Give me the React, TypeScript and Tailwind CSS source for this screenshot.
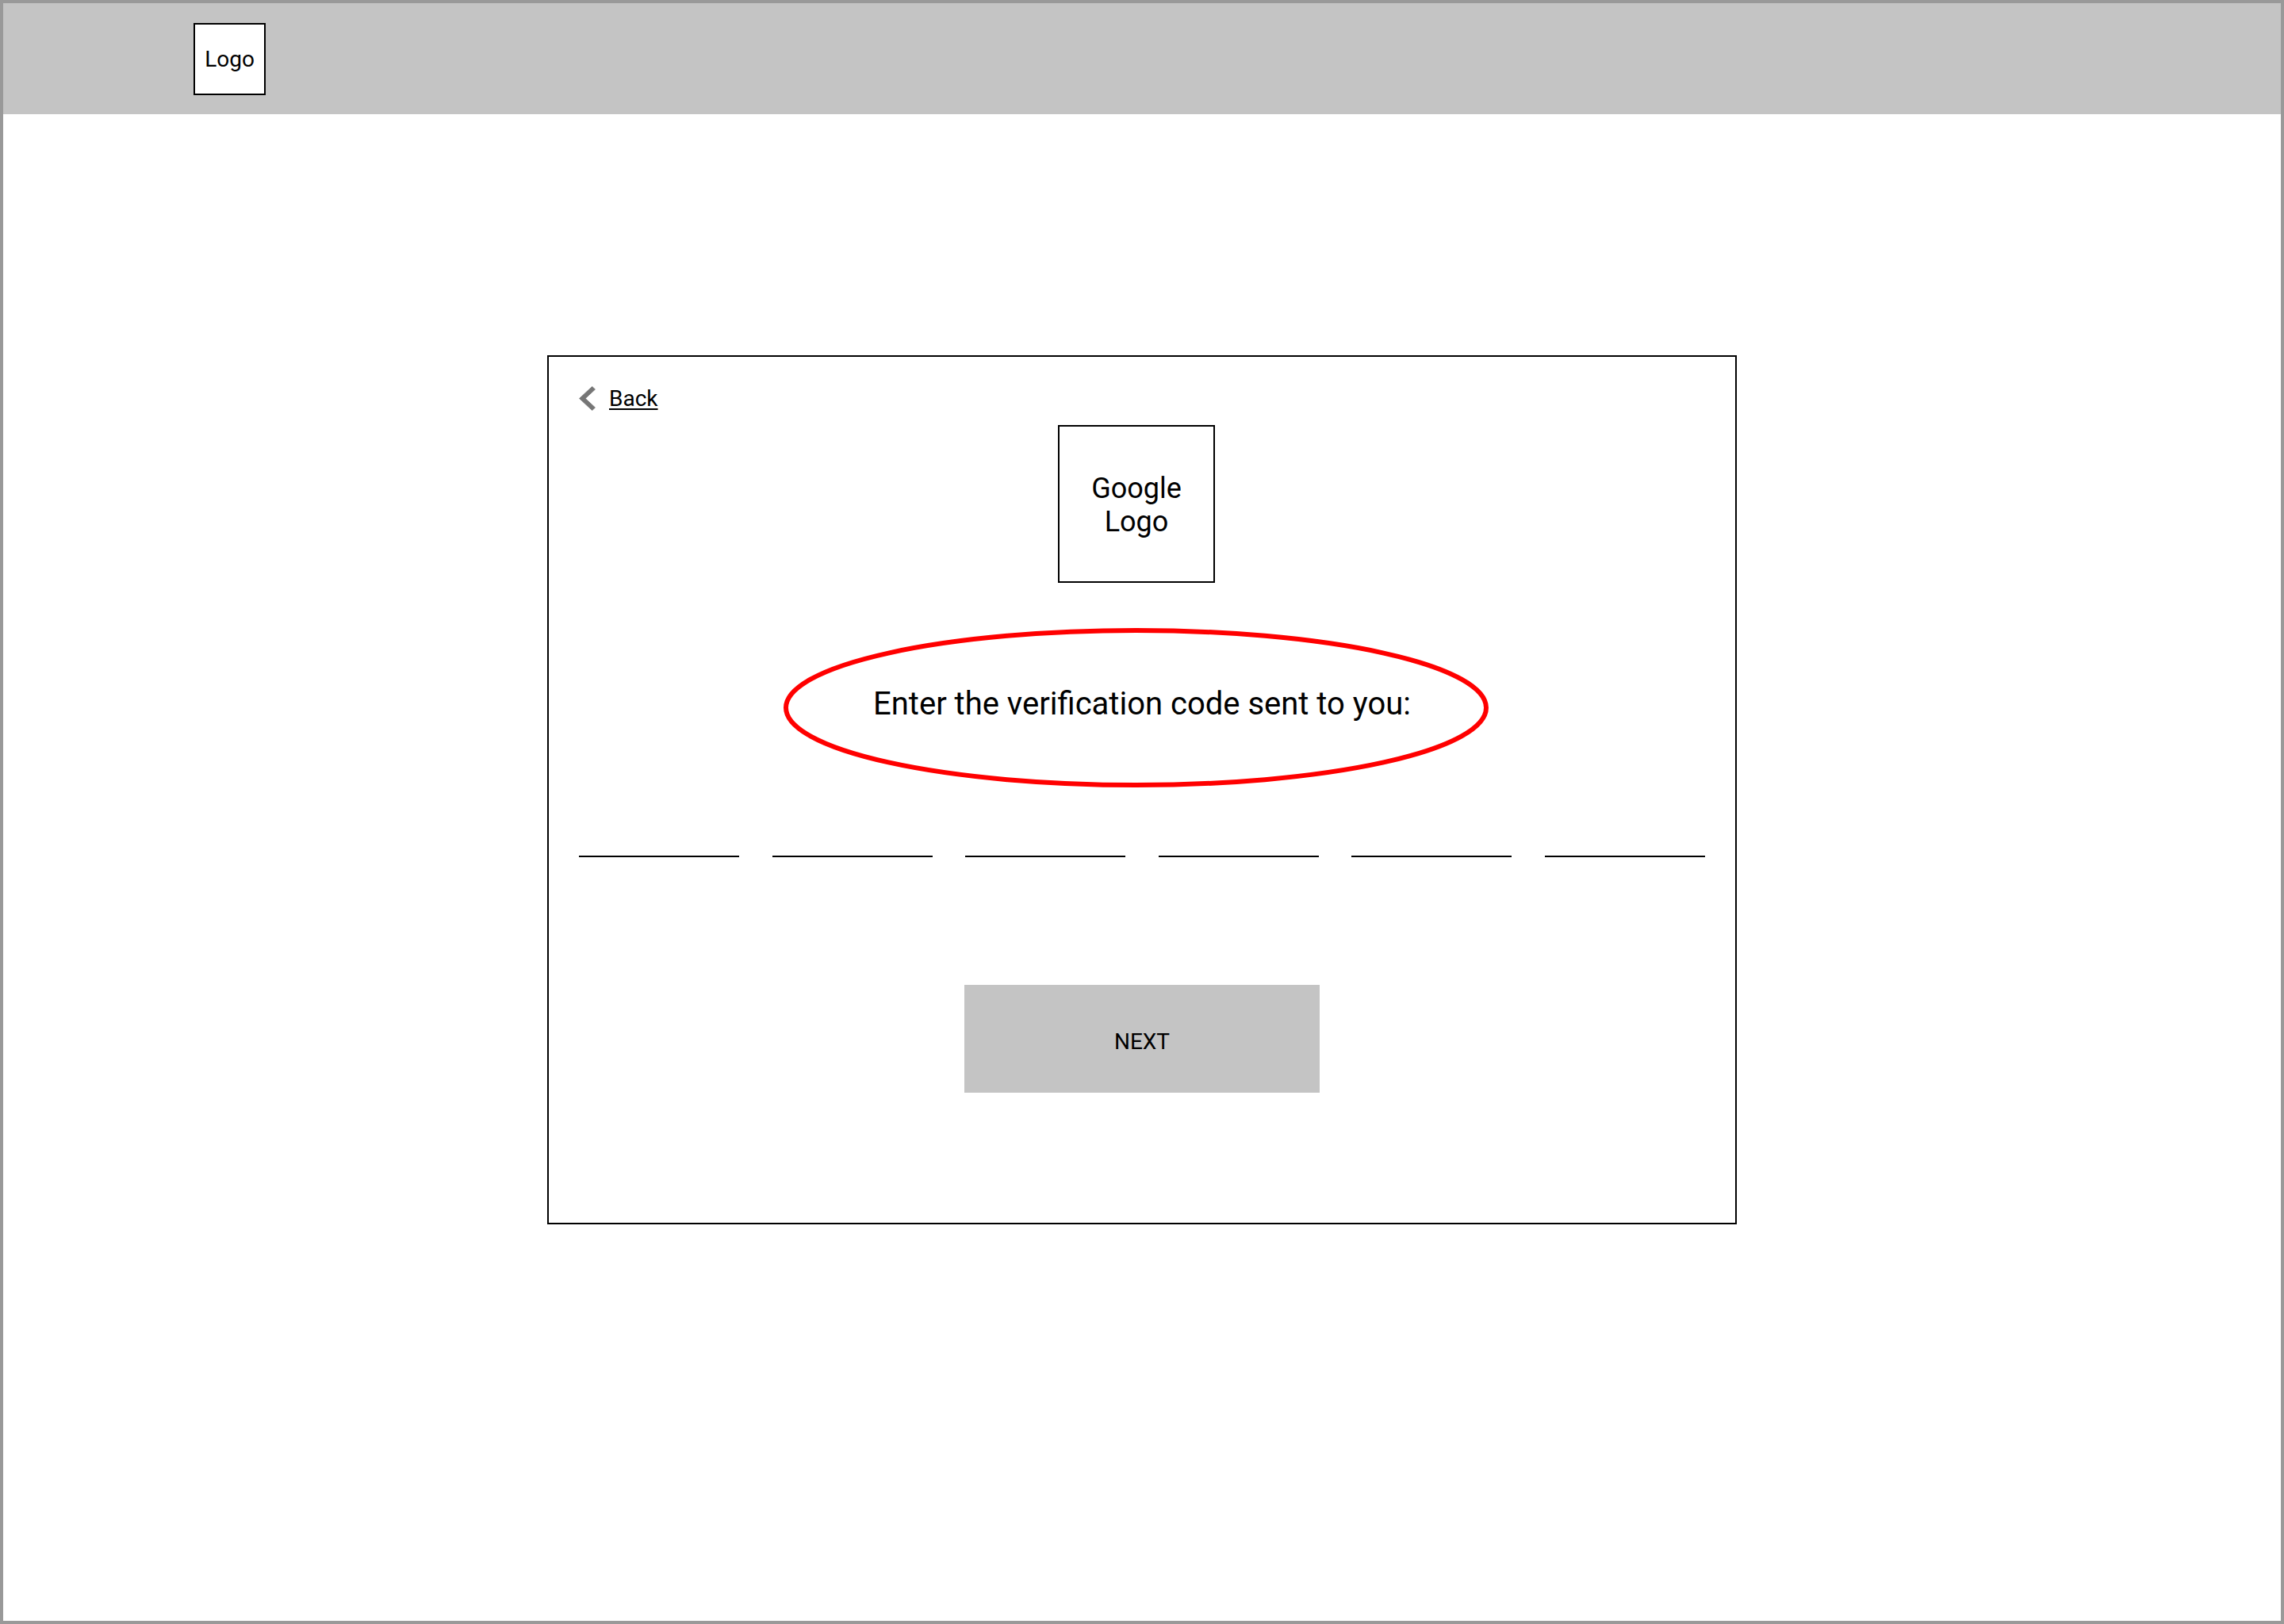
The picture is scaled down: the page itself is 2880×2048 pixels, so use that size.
import React from "react";

export default function App() {
  return (
    <div
      className="w-[2880px] h-[2048px] border-4 border-[#999999] bg-white flex flex-col text-black"
      style={{ fontFamily: "Roboto, 'Liberation Sans', sans-serif" }}
    >
      <header className="h-[140px] bg-[#c4c4c4] flex items-center pl-[240px] shrink-0">
        <div className="w-[91px] h-[91px] border-2 border-black bg-white flex items-center justify-center text-[28px] leading-[33px]">
          Logo
        </div>
      </header>

      <main className="flex flex-col items-center pt-[304px]">
        <div className="relative w-[1500px] h-[1096px] border-2 border-black bg-white flex flex-col px-[38px] pt-[36px]">
          <div className="flex items-center gap-[17px] h-[33px]">
            <svg
              width="21"
              height="31"
              viewBox="7.8 5.8 7.81 12.4"
              preserveAspectRatio="none"
              aria-hidden="true"
            >
              <path
                d="M15.41 7.41L14 6l-6 6 6 6 1.41-1.41L10.83 12z"
                fill="#767676"
                stroke="#767676"
                strokeWidth="0.3"
              />
            </svg>
            <span className="text-[28px] leading-[33px] underline underline-offset-[3px] decoration-2">
              Back
            </span>
          </div>

          <div className="mt-[17px] ml-[604px] self-start w-[198px] h-[199px] border-2 border-black flex items-center justify-center text-center text-[36px] leading-[42px] pt-[3px]">
            <span>
              Google
              <br />
              Logo
            </span>
          </div>

          <p className="mt-[129px] text-center text-[40px] leading-[48px]">
            Enter the verification code sent to you:
          </p>

          <div className="mt-[167px] flex justify-between">
            <div className="w-[202px] h-[2px] bg-black" />
            <div className="w-[202px] h-[2px] bg-black" />
            <div className="w-[202px] h-[2px] bg-black" />
            <div className="w-[202px] h-[2px] bg-black" />
            <div className="w-[202px] h-[2px] bg-black" />
            <div className="w-[202px] h-[2px] bg-black" />
          </div>

          <button className="mt-[161px] self-center w-[448px] h-[136px] bg-[#c4c4c4] flex items-center justify-center text-[28px] leading-[33px] text-black pt-[6px]">
            NEXT
          </button>

          <svg
            className="absolute left-[296px] top-[342px] pointer-events-none"
            width="889"
            height="201"
            viewBox="0 0 889 201"
            aria-hidden="true"
          >
            <ellipse
              cx="444.5"
              cy="100.5"
              rx="441.5"
              ry="97.5"
              fill="none"
              stroke="#ff0000"
              strokeWidth="6"
            />
          </svg>
        </div>
      </main>
    </div>
  );
}
